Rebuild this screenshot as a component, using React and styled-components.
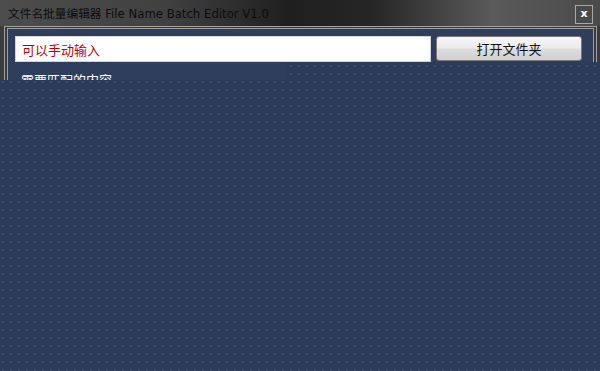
import React from "react";
import styled, { createGlobalStyle } from "styled-components";

const Global = createGlobalStyle`
  html, body { margin: 0; padding: 0; background: #2d3c5a; }
  body { font-family: "DejaVu Sans", "Noto Sans CJK SC", sans-serif; }
`;

const Window = styled.div`
  position: relative;
  width: 600px;
  height: 371px;
  overflow: hidden;
  background: #3c3c3c;
  display: flex;
  flex-direction: column;
`;

const TitleBar = styled.div`
  height: 26px;
  flex: none;
  display: flex;
  align-items: center;
  padding: 0 7px 0 8px;
  background: linear-gradient(90deg, #4d4d4d 0%, #404040 28%, #1f1f1f 48%, #262626 62%, #5a5a5a 82%, #4a4a4a 100%);
`;

const Title = styled.div`
  flex: 1;
  font-family: "DejaVu Sans", "Noto Sans CJK SC", sans-serif;
  font-size: 11.7px;
  color: #0c0c0c;
  white-space: nowrap;
  margin-bottom: 1px;
`;

const CloseButton = styled.div`
  width: 16px;
  height: 17px;
  border: 1px solid #a8a8a8;
  background: #4a4a4a;
  color: #ffffff;
  font-family: "DejaVu Sans", sans-serif;
  font-weight: bold;
  font-size: 11px;
  line-height: 15px;
  text-align: center;
  margin-top: 3px;
`;

const OuterFrame = styled.div`
  flex: 1;
  margin: 0 3px 0 4px;
  border: 1px solid #a0a0a0;
  border-bottom: none;
  padding: 1px 2px 0 2px;
  display: flex;
`;

const Panel = styled.div`
  flex: 1;
  border: 1px solid #9c9c9c;
  border-bottom: none;
  background-color: #2c3b5b;
  background-image:
    linear-gradient(45deg, rgba(255,255,255,0.03) 25%, transparent 25%, transparent 75%, rgba(255,255,255,0.03) 75%),
    linear-gradient(45deg, rgba(255,255,255,0.03) 25%, transparent 25%, transparent 75%, rgba(255,255,255,0.03) 75%);
  background-size: 2px 2px;
  background-position: 0 0, 1px 1px;
  padding: 7px 9px 0 7px;
  display: flex;
  flex-direction: column;
`;

const Row = styled.div`
  display: flex;
  align-items: flex-start;
  gap: 5px;
`;

const TextInput = styled.div`
  width: 408px;
  height: 24px;
  background: #ffffff;
  border: 1px solid #d0d4dc;
  padding-left: 6px;
  display: flex;
  align-items: center;
  font-family: "Noto Sans CJK SC", sans-serif;
  font-size: 13px;
  color: #c00000;
`;

const Button = styled.div`
  width: 144px;
  height: 23px;
  border: 1px solid #7a7a7a;
  border-radius: 3px;
  background: linear-gradient(180deg, #f6f6f6 0%, #ececec 45%, #dcdcdc 55%, #d0d0d0 100%);
  display: flex;
  align-items: center;
  justify-content: center;
  font-family: "Noto Sans CJK SC", sans-serif;
  font-size: 13px;
  color: #111111;
`;

const Label = styled.div`
  margin: 8px 0 0 6px;
  font-family: "Noto Sans CJK SC", sans-serif;
  font-size: 13px;
  color: #ffffff;
`;

const Overlay = styled.div`
  position: absolute;
  left: 0;
  right: 0;
  top: 62px;
  bottom: 0;
  clip-path: polygon(285px 0, 100% 0, 100% 100%, 0 100%, 0 18px, 285px 18px);
  background-color: #2d3c5a;
  background-image: radial-gradient(circle at 2px 2px, rgba(160, 172, 210, 0.16) 0.8px, transparent 1.3px);
  background-size: 8px 8px;
  background-position: 1px 2px;
`;

export default function App() {
  return (
    <>
      <Global />
      <Window>
        <TitleBar>
          <Title>文件名批量编辑器 File Name Batch Editor V1.0</Title>
          <CloseButton>x</CloseButton>
        </TitleBar>
        <OuterFrame>
          <Panel>
            <Row>
              <TextInput>可以手动输入</TextInput>
              <Button>打开文件夹</Button>
            </Row>
            <Label>需要匹配的内容</Label>
          </Panel>
        </OuterFrame>
        <Overlay />
      </Window>
    </>
  );
}
